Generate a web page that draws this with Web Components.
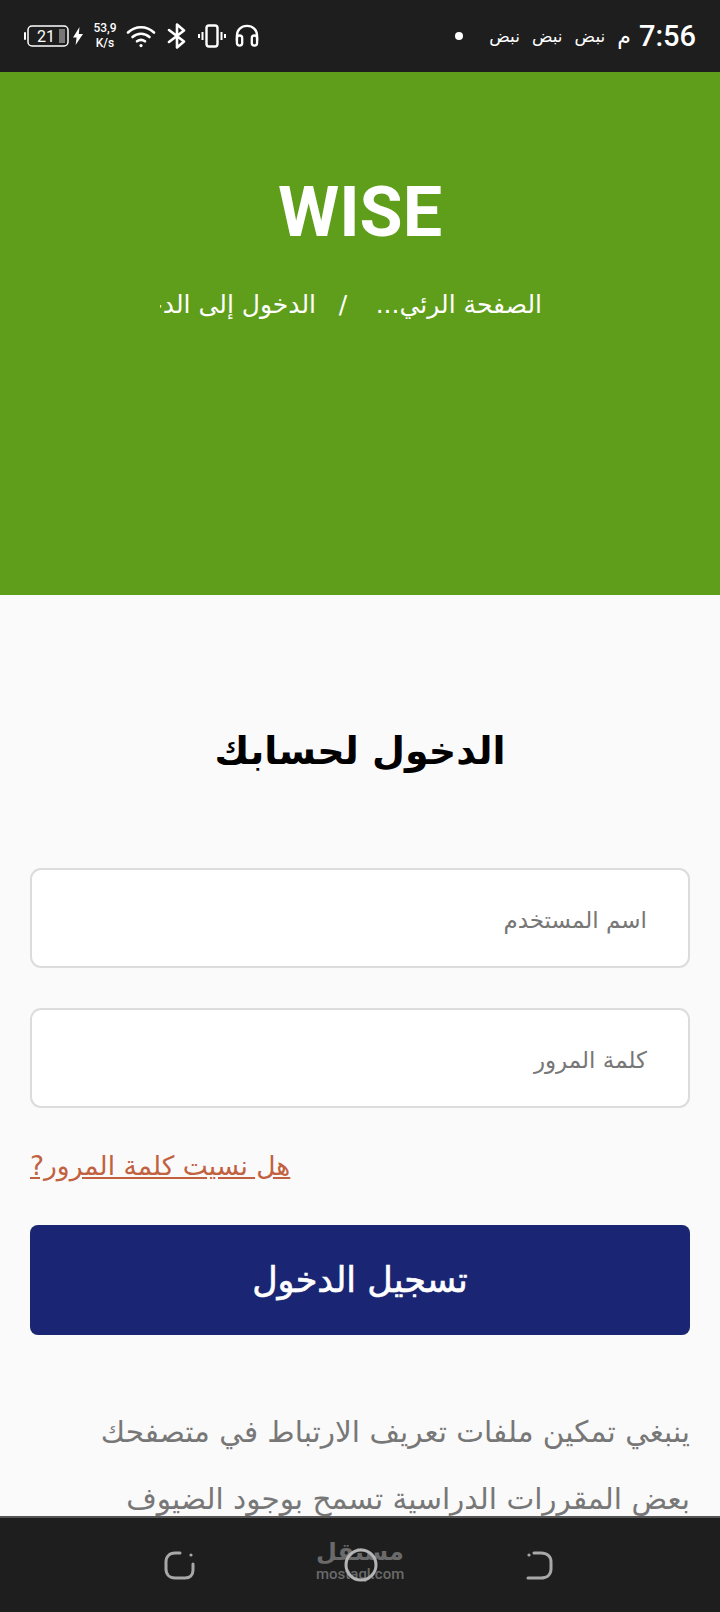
<!DOCTYPE html>
<html lang="ar">
<head>
<meta charset="utf-8">
<style>
  html, body { margin: 0; padding: 0; }
  body { width: 720px; height: 1612px; overflow: hidden; display: flex; flex-direction: column; font-family: "DejaVu Sans", sans-serif; background: #fafafa; }
</style>
</head>
<body>
<status-bar></status-bar>
<hero-banner heading="WISE"></hero-banner>
<login-panel></login-panel>
<nav-bar></nav-bar>

<script>
const arabicFont = `"DejaVu Sans", "Noto Sans", sans-serif`;

class StatusBar extends HTMLElement {
    constructor() {
        super();
        this.attachShadow({ mode: "open" });
        this.shadowRoot.innerHTML = `
<style>
:host { display: flex; height: 72px; flex: none; background: #1e1e1e; color: #fff; align-items: center; justify-content: space-between; padding: 0 24px; box-sizing: border-box; font-family: Roboto, sans-serif; }
.left, .right { display: flex; align-items: center; }
svg { display: block; }
.batt { position: relative; width: 45px; height: 22px; margin-right: 4px; }
.batt span { position: absolute; left: 13px; top: 2px; font-size: 16px; line-height: 19px; }
.speed { font-size: 12px; line-height: 15px; text-align: center; font-weight: 500; margin: 0 9px 0 10px; width: 24px; white-space: nowrap; display: flex; flex-direction: column; align-items: center; }
.right { direction: ltr; }
.dot { width: 8px; height: 8px; border-radius: 50%; background: #fff; margin-right: 26px; }
.pulse { font: 17px ${arabicFont}; margin-right: 12px; direction: rtl; }
.meem { font: 22px ${arabicFont}; margin: 0 8px 0 0; }
.time { font-size: 29px; font-weight: 500; }
</style>
<div class="left">
  <div class="batt">
    <svg width="45" height="22" viewBox="0 0 45 22" fill="none">
      <rect x="0" y="7" width="2" height="8" rx="1" fill="#fff"/>
      <rect x="4" y="1" width="40" height="20" rx="4" stroke="#fff" stroke-width="1.5"/>
      <rect x="35" y="4" width="6" height="14" fill="#777"/>
    </svg>
    <span>21</span>
  </div>
  <svg width="10" height="18" viewBox="0 0 10 18"><path d="M6.5 0 0 10.5h3.6L2.6 18 10 7H5.8z" fill="#fff"/></svg>
  <div class="speed"><span>53,9</span><span>K/s</span></div>
  <svg width="30" height="24" viewBox="0 0 30 24" fill="none" stroke="#fff" stroke-width="2.6" stroke-linecap="round">
    <path d="M2 8.5C9.5 1.5 20.5 1.5 28 8.5"/>
    <path d="M6.5 13C11.5 8.7 18.5 8.7 23.5 13"/>
    <path d="M11 17.3C13.4 15.5 16.6 15.5 19 17.3"/>
    <circle cx="15" cy="21.6" r="1.6" fill="#fff" stroke="none"/>
  </svg>
  <svg style="margin-left:11px" width="20" height="26" viewBox="0 0 20 26" fill="none" stroke="#fff" stroke-width="2.6" stroke-linejoin="round" stroke-linecap="round">
    <path d="M2 7 17 18.5 10 24.5V1.5L17 7.5 2 19"/>
  </svg>
  <svg style="margin-left:11px" width="28" height="24" viewBox="0 0 28 24" fill="none" stroke="#fff">
    <rect x="8.5" y="1.5" width="11" height="21" rx="2.5" stroke-width="2.4"/>
    <path d="M4.5 8v8M1 10v4M23.500 8v8M27 10v4" stroke-width="2"/>
  </svg>
  <svg style="margin-left:9px" width="24" height="24" viewBox="0 0 25 24" fill="none" stroke="#fff" stroke-width="2.4">
    <path d="M2 17V11.500C2 5.500 6.500 1.500 12.500 1.500S23 5.500 23 11.500V17"/>
    <rect x="2" y="11.500" width="5.500" height="10.500" rx="2.700"/>
    <rect x="17.500" y="11.500" width="5.500" height="10.500" rx="2.700"/>
  </svg>
</div>
<div class="right">
  <div class="dot"></div>
  <span class="pulse">نبض</span><span class="pulse">نبض</span><span class="pulse">نبض</span>
  <span class="meem">م</span>
  <span class="time">7:56</span>
</div>`;
    }
}
customElements.define("status-bar", StatusBar);

class HeroBanner extends HTMLElement {
    constructor() {
        super();
        this.attachShadow({ mode: "open" });
        this.shadowRoot.innerHTML = `
<style>
:host { display: block; height: 523px; flex: none; background: #5f9e1a; color: #fff; text-align: center; box-sizing: border-box; padding-top: 99px; }
h1 { margin: 0; font: 700 70px/82px Roboto, sans-serif; }
.crumbs { display: flex; direction: rtl; margin: 32px 0 0 160px; font: 25px/40px ${arabicFont}; width: 382px; white-space: nowrap; }
.home { width: 164px; }
.sep { width: 62px; flex: none; padding-right: 8px; box-sizing: border-box; }
.here { width: 156px; overflow: hidden; }
</style>
<h1></h1>
<div class="crumbs"><span class="home">الصفحة الرئي...</span><span class="sep">/</span><span class="here">الدخول إلى الدخول</span></div>`;
    }
    connectedCallback() {
        this.shadowRoot.querySelector("h1").textContent = this.getAttribute("heading");
    }
}
customElements.define("hero-banner", HeroBanner);

class TextField extends HTMLElement {
    constructor() {
        super();
        this.attachShadow({ mode: "open" });
        this.shadowRoot.innerHTML = `
<style>
:host { display: flex; align-items: center; height: 100px; box-sizing: border-box; background: #fff; border: 2px solid #dcdcdc; border-radius: 11px; padding: 3px 41px 0; color: #777; font: 23px ${arabicFont}; direction: rtl; }
</style>
<slot></slot>`;
    }
}
customElements.define("text-field", TextField);

class LoginPanel extends HTMLElement {
    constructor() {
        super();
        this.attachShadow({ mode: "open" });
        this.shadowRoot.innerHTML = `
<style>
:host { display: block; flex: 1; min-height: 0; overflow: hidden; padding: 124px 30px 0; direction: rtl; font-family: ${arabicFont}; }
h2 { margin: 0 0 85px; font: 700 38px/64px ${arabicFont}; text-align: center; color: #000; }
.fields { display: flex; flex-direction: column; gap: 40px; }
a { display: block; margin-top: 40px; text-align: left; color: #c2613f; font-size: 26.500px; line-height: 36px; text-decoration: underline; }
.submit { margin-top: 41px; height: 110px; border-radius: 8px; background: #1a2674; color: #fff; display: flex; align-items: center; justify-content: center; font-size: 35px; -webkit-text-stroke: 0.6px #fff; }
p { margin: 64px 0 0; color: #777; font-size: 29.500px; line-height: 67px; white-space: nowrap; }
</style>
<h2>الدخول لحسابك</h2>
<div class="fields">
  <text-field>اسم المستخدم</text-field>
  <text-field>كلمة المرور</text-field>
</div>
<a>هل نسيت كلمة المرور?</a>
<div class="submit">تسجيل الدخول</div>
<p>ينبغي تمكين ملفات تعريف الارتباط في متصفحك<br>بعض المقررات الدراسية تسمح بوجود الضيوف</p>`;
    }
}
customElements.define("login-panel", LoginPanel);

class NavBar extends HTMLElement {
    constructor() {
        super();
        this.attachShadow({ mode: "open" });
        this.shadowRoot.innerHTML = `
<style>
:host { display: block; position: relative; height: 94px; flex: none; background: #1e1e1e; border-top: 2px solid #555; }
.keys { display: flex; justify-content: space-between; align-items: center; height: 94px; padding: 0 167px 0 164px; }
svg { display: block; }
.mark { position: absolute; left: 316px; top: 19px; width: 88px; text-align: center; color: #6a6a6a; font: 700 24px/30px "DejaVu Sans", sans-serif; }
.mark small { display: block; font: 500 15px/15px Roboto, sans-serif; }
</style>
<div class="mark">مستقل<small>mostaql.com</small></div>
<div class="keys">
  <svg width="31" height="29" viewBox="0 0 31 29" fill="none" stroke="#a8a8a8" stroke-width="3" stroke-linecap="round">
    <path d="M16 2H11C5.500 2 2 5.500 2 11V18C2 23.500 5.500 27 11 27H21C26 27 29 24 29 19V13"/>
    <circle cx="27" cy="4" r="1.600" fill="#a8a8a8" stroke="none"/>
  </svg>
  <svg style="position:relative;z-index:1" width="34" height="34" viewBox="0 0 34 34" fill="none" stroke="#b4b4b4" stroke-width="3"><circle cx="17" cy="17" r="15"/></svg>
  <svg width="27" height="29" viewBox="0 0 27 29" fill="none" stroke="#a8a8a8" stroke-width="3" stroke-linecap="round">
    <path d="M8 2H15C21 2 25 5.500 25 11V18C25 23.500 21 27 15 27H2"/>
    <circle cx="3" cy="4" r="1.600" fill="#a8a8a8" stroke="none"/>
  </svg>
</div>`;
    }
}
customElements.define("nav-bar", NavBar);
</script>
</body>
</html>
